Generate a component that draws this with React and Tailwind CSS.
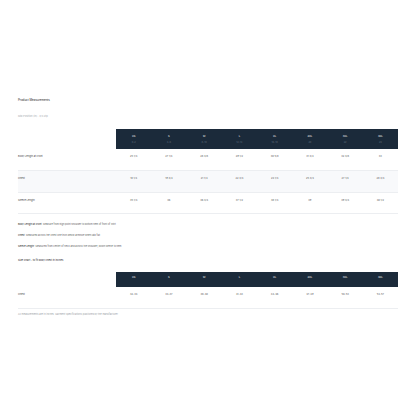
const sizes = [
  { name: 'XS', fit: '0-2' },
  { name: 'S', fit: '4-6' },
  { name: 'M', fit: '8-10' },
  { name: 'L', fit: '12-14' },
  { name: 'XL', fit: '16-18' },
  { name: '2XL', fit: '20' },
  { name: '3XL', fit: '22' },
  { name: '4XL', fit: '24' },
];

const garmentRows = [
  { label: 'Body Length at Front', values: ['25 1/4', '27 1/4', '28 3/8', '29 1/2', '30 5/8', '31 3/4', '32 3/8', '33'] },
  { label: 'Chest', values: ['18 1/4', '19 3/4', '21 1/4', '22 3/4', '24 1/4', '25 3/4', '27 1/4', '28 3/4'] },
  { label: 'Sleeve Length', values: ['35 1/4', '36', '36 3/4', '37 1/2', '38 1/4', '39', '39 3/4', '40 1/2'] },
];

const bodyRows = [
  { label: 'Chest', values: ['32-34', '34-37', '38-40', '41-43', '44-46', '47-49', '50-53', '54-57'] },
];

const notes = [
  ['Body Length at Front:', 'Measure from high point shoulder to bottom hem of front of shirt'],
  ['Chest:', 'Measured across the chest one inch below armhole when laid flat'],
  ['Sleeve Length:', 'Measured from center of neck and across the shoulder, down sleeve to hem'],
];

function SizeTable({ rows, tall }) {
  return (
    <div className="w-full">
      <div className="grid grid-cols-[98px_repeat(8,1fr)]">
        <div />
        {sizes.map((s) => (
          <div
            key={s.name}
            className={`bg-[#1b2a3a] text-center text-white ${tall ? 'h-[20px] pt-[5px]' : 'h-[15px] pt-[3px]'}`}
          >
            <div className="text-[2.6px] leading-[4px]">{s.name}</div>
            {tall && <div className="mt-[3px] text-[2.4px] leading-[3px] text-[#5f6c7a]">{s.fit}</div>}
          </div>
        ))}
      </div>
      {rows.map((row, i) => (
        <div
          key={row.label}
          className={`grid grid-cols-[98px_repeat(8,1fr)] border-b border-[#eceef1] ${
            i === 1 ? 'bg-[#f8f9fb]' : 'bg-white'
          } ${tall ? 'h-[21.7px]' : 'h-[22px]'}`}
        >
          <div className="pt-[6px] text-[2.5px] leading-[3px] text-[#444]">{row.label}</div>
          {row.values.map((v, j) => (
            <div key={j} className="pt-[6px] text-center text-[2.5px] leading-[3px] text-[#555]">
              {v}
            </div>
          ))}
        </div>
      ))}
    </div>
  );
}

export default function App() {
  return (
    <div className="min-h-[416px] w-[416px] bg-white px-[18px] pt-[98px]" style={{ fontFamily: 'Inter, "Liberation Sans", sans-serif' }}>
      <h1 className="m-0 text-[2.9px] leading-[4px] font-normal text-[#222]">Product Measurements</h1>
      <p className="m-0 mt-[13px] text-[2.5px] leading-[4px] text-[#a3a7ad]">Mid Position (in) · 3/4 Zip</p>

      <div className="mt-[10.3px]">
        <SizeTable rows={garmentRows} tall />
      </div>

      <div className="mt-[8.7px] flex flex-col gap-[7px]">
        {notes.map(([k, v]) => (
          <p key={k} className="m-0 text-[2.4px] leading-[4px] text-[#666]">
            <span className="text-[#222]">{k}</span> {v}
          </p>
        ))}
      </div>

      <p className="m-0 mt-[10px] text-[2.5px] leading-[4px] text-[#222]">
        Size Chart - to fit body chest in inches
      </p>

      <div className="mt-[8.7px]">
        <SizeTable rows={bodyRows} tall={false} />
      </div>

      <p className="m-0 mt-[4px] text-[2.45px] leading-[4px] text-[#9aa0a6]">
        All measurements are in inches. Garment specifications published by the manufacturer.
      </p>
    </div>
  );
}
